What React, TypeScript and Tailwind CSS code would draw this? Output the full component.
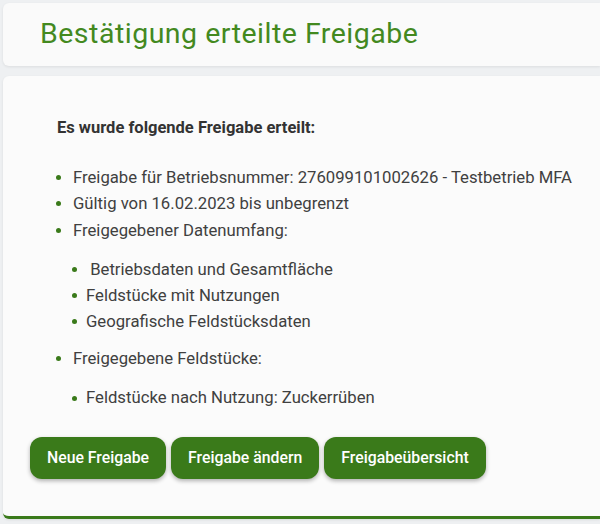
const items = [
  "Freigabe für Betriebsnummer: 276099101002626 - Testbetrieb MFA",
  "Gültig von 16.02.2023 bis unbegrenzt",
  "Freigegebener Datenumfang:",
];

const umfang = [" Betriebsdaten und Gesamtfläche", "Feldstücke mit Nutzungen", "Geografische Feldstücksdaten"];

function Bullet({ text, nested }: { text: string; nested?: boolean }) {
  return (
    <li className={`flex items-center ${nested ? "h-[26px] pl-[16px]" : "h-[26.5px]"}`}>
      <span
        className={`w-[5px] h-[5px] rounded-full bg-[#3a7a1a] shrink-0 ${nested ? "mr-[9px]" : "mr-[12px]"}`}
      />
      <span className="whitespace-pre">{text}</span>
    </li>
  );
}

export default function App() {
  return (
    <div
      className="min-h-[524px] bg-[#eef0f2] pt-[3px] pl-[3px] pb-[8px] text-[#404040]"
      style={{ fontFamily: "Roboto, 'Liberation Sans', sans-serif" }}
    >
      <div className="bg-[#fafafa] rounded-l-[6px] h-[63px] flex items-center pl-[37px] shadow-[0_1px_3px_rgba(0,0,0,0.08)]">
        <h1 className="text-[28.5px] tracking-[0.5px] text-[#43891f] leading-none">Bestätigung erteilte Freigabe</h1>
      </div>
      <div className="mt-[10px] bg-[#fbfbfb] rounded-l-[6px] border-b-[3px] border-[#3a7a1a] shadow-[0_1px_3px_rgba(0,0,0,0.08)] pl-[27px] pt-[40px] pb-[37px]">
        <p className="pl-[27px] text-[16.5px] font-bold text-[#333] leading-[24px]">Es wurde folgende Freigabe erteilt:</p>
        <ul className="mt-[24px] pl-[26px] text-[16.7px]">
          {items.map((t) => (
            <Bullet key={t} text={t} />
          ))}
        </ul>
        <ul className="mt-[13px] pl-[26px] text-[16.7px]">
          {umfang.map((t) => (
            <Bullet key={t} text={t} nested />
          ))}
        </ul>
        <ul className="mt-[11px] pl-[26px] text-[16.7px]">
          <Bullet text="Freigegebene Feldstücke:" />
        </ul>
        <ul className="mt-[13px] pl-[26px] text-[16.7px]">
          <Bullet text="Feldstücke nach Nutzung: Zuckerrüben" nested />
        </ul>
        <div className="mt-[26px] flex gap-[5px]">
          {["Neue Freigabe", "Freigabe ändern", "Freigabeübersicht"].map((b) => (
            <button
              key={b}
              className="h-[42px] px-[17px] rounded-[12px] bg-[#3a7a1a] text-white text-[15.8px] font-medium shadow-[0_2px_4px_rgba(0,0,0,0.3)]"
            >
              {b}
            </button>
          ))}
        </div>
      </div>
    </div>
  );
}
